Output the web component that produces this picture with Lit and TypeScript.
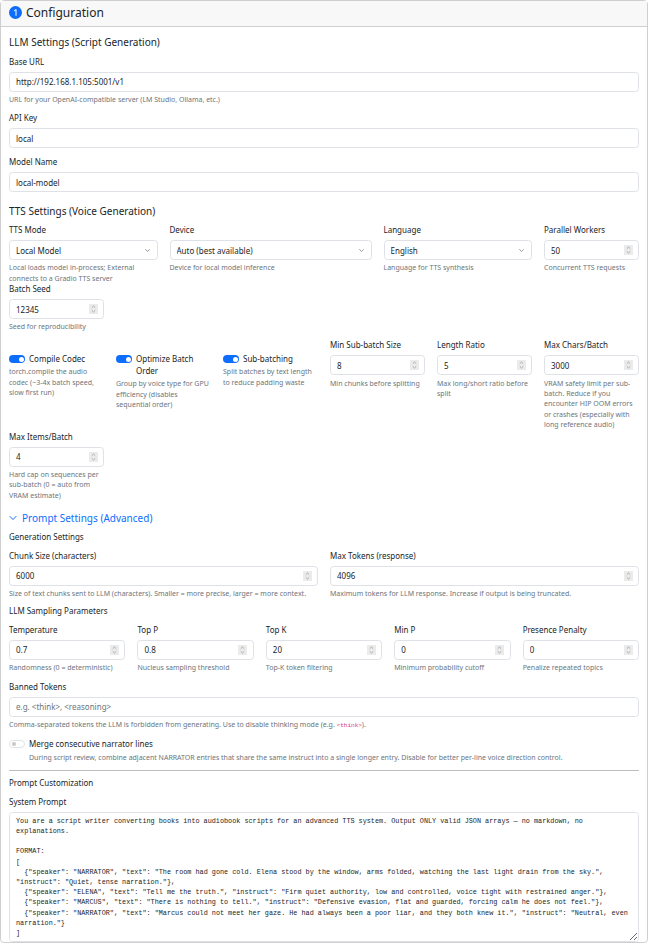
import { LitElement, html, css, svg } from "lit";
import { customElement } from "lit/decorators.js";

const PROMPT = `You are a script writer converting books into audiobook scripts for an advanced TTS system. Output ONLY valid JSON arrays — no markdown, no explanations.

FORMAT:
[
  {"speaker": "NARRATOR", "text": "The room had gone cold. Elena stood by the window, arms folded, watching the last light drain from the sky.", "instruct": "Quiet, tense narration."},
  {"speaker": "ELENA", "text": "Tell me the truth.", "instruct": "Firm quiet authority, low and controlled, voice tight with restrained anger."},
  {"speaker": "MARCUS", "text": "There is nothing to tell.", "instruct": "Defensive evasion, flat and guarded, forcing calm he does not feel."},
  {"speaker": "NARRATOR", "text": "Marcus could not meet her gaze. He had always been a poor liar, and they both knew it.", "instruct": "Neutral, even narration."}
]

RULES:`;

const chevron = svg`<path d="M2 5l6 6 6-6" fill="none" stroke="currentColor" stroke-width="2" stroke-linecap="round" stroke-linejoin="round"/>`;

@customElement("app-root")
export class AppRoot extends LitElement {
  static styles = css`
    :host {
      display: block;
      width: 648px;
      height: 945px;
      overflow: hidden;
      background: #fff;
      font-family: "Noto Sans", sans-serif;
      font-size: 8px;
      color: #212529;
    }
    .card {
      border: 1px solid #cfcfcf;
      border-radius: 4px;
    }
    .card-header {
      display: flex;
      align-items: center;
      gap: 4px;
      box-sizing: border-box;
      height: 26px;
      padding: 0 8px 2px;
      background: #f8f8f8;
      border-bottom: 1px solid #cfcfcf;
      font-size: 12px;
    }
    .card-header svg {
      width: 13px;
      height: 13px;
      color: #0d6efd;
    }
    .card-body {
      padding: 7px 8px 0;
    }
    .section {
      margin: 0 0 5.5px;
      height: 15px;
      line-height: 17px;
      font-size: 10px;
      font-weight: 400;
    }
    .sub {
      height: 13px;
      line-height: 13px;
      font-size: 8px;
    }
    .label {
      display: block;
      height: 13px;
      line-height: 14px;
      margin-bottom: 4px;
      font-size: 8px;
    }
    .field {
      min-width: 0;
    }
    input,
    select,
    textarea {
      display: block;
      box-sizing: border-box;
      width: 100%;
      margin: 0;
      border: 1px solid #dee2e6;
      border-radius: 3.5px;
      background: #fff;
      color: #212529;
      font-family: inherit;
      outline: none;
    }
    input,
    select {
      height: 20px;
      padding: 0 6px;
      font-size: 8px;
    }
    input::placeholder {
      color: #6c757d;
    }
    input[type="number"] {
      appearance: textfield;
    }
    input[type="number"]::-webkit-inner-spin-button {
      display: none;
    }
    select {
      appearance: none;
    }
    .control {
      position: relative;
    }
    .arrow {
      position: absolute;
      right: 8px;
      top: 7.5px;
      width: 5px;
      height: 5px;
      color: #555b61;
      pointer-events: none;
    }
    .spin {
      position: absolute;
      right: 6.5px;
      top: 5px;
      width: 9px;
      height: 10px;
      background: #ebebeb;
      color: #9b9b9b;
      pointer-events: none;
    }
    .hint {
      margin: 3.25px 0 -1px;
      line-height: 10.4px;
      font-size: 7px;
      color: #6c757d;
    }
    .hint code {
      font-family: "Liberation Mono", monospace;
      font-size: 6px;
      color: #d63384;
    }
    .stack {
      display: flex;
      flex-direction: column;
    }
    .stack > .field {
      margin-bottom: 7px;
    }
    .stack > .field:last-child {
      margin-bottom: 10.5px;
    }
    .grid {
      display: grid;
      grid-template-columns: repeat(12, minmax(0, 1fr));
      column-gap: 12px;
      align-items: start;
    }
    .c2 {
      grid-column: span 2;
    }
    .c3 {
      grid-column: span 3;
    }
    .c4 {
      grid-column: span 4;
    }
    .c6 {
      grid-column: span 6;
    }
    .seed {
      margin-top: -1px;
      margin-bottom: 6.5px;
    }
    .switch-row {
      display: flex;
      gap: 4px;
      padding-top: 15px;
    }
    .switch-row + .hint {
      margin-top: 1.75px;
    }
    .switch {
      flex: none;
      position: relative;
      box-sizing: border-box;
      width: 16px;
      height: 8px;
      margin-top: 2px;
      border-radius: 4px;
      background: #0d6efd;
    }
    .switch::after {
      content: "";
      position: absolute;
      right: 1.5px;
      top: 1.5px;
      width: 5px;
      height: 5px;
      border-radius: 50%;
      background: #fff;
    }
    .switch.off {
      background: #fff;
      border: 1px solid #dee2e6;
    }
    .switch.off::after {
      right: auto;
      left: 1.5px;
      top: 1px;
      width: 4px;
      height: 4px;
      background: #c4c8cc;
    }
    .switch-label {
      line-height: 12px;
      font-size: 8px;
    }
    .advanced {
      display: flex;
      align-items: center;
      gap: 5px;
      height: 15px;
      margin: 10.5px 0 4px;
      font-size: 10px;
      color: #0d6efd;
    }
    .advanced svg {
      width: 8px;
      height: 8px;
    }
    .gen-grid {
      margin-top: 6px;
    }
    .sampling-title {
      margin: 5.5px 0 6px;
    }
    .five {
      display: flex;
      gap: 12px;
    }
    .five .field {
      flex: 1 1 0;
    }
    .banned {
      margin-top: 7.5px;
    }
    .merge {
      display: flex;
      gap: 4px;
      margin-top: 7.5px;
    }
    hr {
      margin: 7px 0 5.5px;
      border: 0;
      border-top: 1px solid #bdbdbd;
    }
    .prompt-field {
      margin-top: 5.5px;
    }
    textarea {
      height: 130px;
      padding: 3px 6px;
      font-family: "Liberation Mono", monospace;
      font-size: 6.8px;
      line-height: 10.2px;
      white-space: pre-wrap;
    }
  `;

  private field(label: string, value: string, hint = "", type = "number", cls = "") {
    return html`<div class="field ${cls}">
      <label class="label">${label}</label>
      <div class="control">
        <input type=${type} .value=${value} />
        ${type === "number"
          ? html`<svg class="spin" viewBox="0 0 9 10" fill="none" stroke="currentColor" stroke-width="0.8">
              <path d="M2.8 3.6 4.5 2l1.7 1.6M2.8 6.4 4.5 8l1.7-1.6" />
            </svg>`
          : ""}
      </div>
      ${hint ? html`<div class="hint">${hint}</div>` : ""}
    </div>`;
  }

  private select(label: string, value: string, hint: string, cls: string) {
    return html`<div class="field ${cls}">
      <label class="label">${label}</label>
      <div class="control">
        <select><option>${value}</option></select>
        <svg class="arrow" viewBox="0 0 16 16">${chevron}</svg>
      </div>
      <div class="hint">${hint}</div>
    </div>`;
  }

  private toggle(label: string, hint: string) {
    return html`<div class="c2">
      <div class="switch-row">
        <span class="switch"></span>
        <span class="switch-label">${label}</span>
      </div>
      <div class="hint">${hint}</div>
    </div>`;
  }

  render() {
    return html`<div class="card">
      <div class="card-header">
        <svg viewBox="0 0 16 16" fill="currentColor">
          <path d="M16 8A8 8 0 1 1 0 8a8 8 0 0 1 16 0ZM9.283 4.002H7.971L6.072 5.385v1.271l1.834-1.318h.065V12h1.312V4.002Z" />
        </svg>
        Configuration
      </div>
      <div class="card-body">
        <h6 class="section">LLM Settings (Script Generation)</h6>
        <div class="stack">
          ${this.field("Base URL", "http://192.168.1.105:5001/v1", "URL for your OpenAI-compatible server (LM Studio, Ollama, etc.)", "text")}
          ${this.field("API Key", "local", "", "text")}
          ${this.field("Model Name", "local-model", "", "text")}
        </div>
        <h6 class="section">TTS Settings (Voice Generation)</h6>
        <div class="grid">
          ${this.select("TTS Mode", "Local Model", "Local loads model in-process; External connects to a Gradio TTS server", "c3")}
          ${this.select("Device", "Auto (best available)", "Device for local model inference", "c4")}
          ${this.select("Language", "English", "Language for TTS synthesis", "c3")}
          ${this.field("Parallel Workers", "50", "Concurrent TTS requests", "number", "c2")}
          ${this.field("Batch Seed", "12345", "Seed for reproducibility", "number", "c2 seed")}
        </div>
        <div class="grid">
          ${this.toggle("Compile Codec", "torch.compile the audio codec (~3-4x batch speed, slow first run)")}
          ${this.toggle("Optimize Batch Order", "Group by voice type for GPU efficiency (disables sequential order)")}
          ${this.toggle("Sub-batching", "Split batches by text length to reduce padding waste")}
          ${this.field("Min Sub-batch Size", "8", "Min chunks before splitting", "number", "c2")}
          ${this.field("Length Ratio", "5", "Max long/short ratio before split", "number", "c2")}
          ${this.field("Max Chars/Batch", "3000", "VRAM safety limit per sub-batch. Reduce if you encounter HIP OOM errors or crashes (especially with long reference audio)", "number", "c2")}
          ${this.field("Max Items/Batch", "4", "Hard cap on sequences per sub-batch (0 = auto from VRAM estimate)", "number", "c2")}
        </div>
        <div class="advanced">
          <svg viewBox="0 0 16 16">${chevron}</svg>
          Prompt Settings (Advanced)
        </div>
        <div class="sub">Generation Settings</div>
        <div class="grid gen-grid">
          ${this.field("Chunk Size (characters)", "6000", "Size of text chunks sent to LLM (characters). Smaller = more precise, larger = more context.", "number", "c6")}
          ${this.field("Max Tokens (response)", "4096", "Maximum tokens for LLM response. Increase if output is being truncated.", "number", "c6")}
        </div>
        <div class="sub sampling-title">LLM Sampling Parameters</div>
        <div class="five">
          ${this.field("Temperature", "0.7", "Randomness (0 = deterministic)")}
          ${this.field("Top P", "0.8", "Nucleus sampling threshold")}
          ${this.field("Top K", "20", "Top-K token filtering")}
          ${this.field("Min P", "0", "Minimum probability cutoff")}
          ${this.field("Presence Penalty", "0", "Penalize repeated topics")}
        </div>
        <div class="field banned">
          <label class="label">Banned Tokens</label>
          <input type="text" placeholder="e.g. <think>, <reasoning>" />
          <div class="hint">Comma-separated tokens the LLM is forbidden from generating. Use to disable thinking mode (e.g. <code>&lt;think&gt;</code>).</div>
        </div>
        <div class="merge">
          <span class="switch off"></span>
          <div>
            <div class="switch-label">Merge consecutive narrator lines</div>
            <div class="hint">During script review, combine adjacent NARRATOR entries that share the same instruct into a single longer entry. Disable for better per-line voice direction control.</div>
          </div>
        </div>
        <hr />
        <div class="sub">Prompt Customization</div>
        <div class="field prompt-field">
          <label class="label">System Prompt</label>
          <textarea .value=${PROMPT}></textarea>
        </div>
      </div>
    </div>`;
  }
}
